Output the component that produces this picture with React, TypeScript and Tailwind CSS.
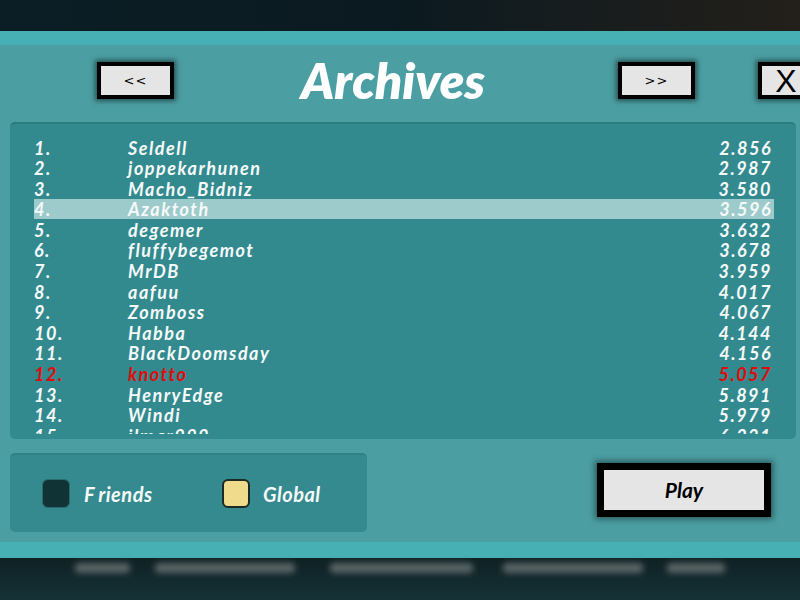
import React from 'react'

// ─── data ────────────────────────────────────────────────────────────────────

type Entry = { rank: number; name: string; time: string; me?: boolean; mine?: boolean }

const ENTRIES: Entry[] = [
  { rank: 1, name: 'Seldell', time: '2.856' },
  { rank: 2, name: 'joppekarhunen', time: '2.987' },
  { rank: 3, name: 'Macho_Bidniz', time: '3.580' },
  { rank: 4, name: 'Azaktoth', time: '3.596', me: true },
  { rank: 5, name: 'degemer', time: '3.632' },
  { rank: 6, name: 'fluffybegemot', time: '3.678' },
  { rank: 7, name: 'MrDB', time: '3.959' },
  { rank: 8, name: 'aafuu', time: '4.017' },
  { rank: 9, name: 'Zomboss', time: '4.067' },
  { rank: 10, name: 'Habba', time: '4.144' },
  { rank: 11, name: 'BlackDoomsday', time: '4.156' },
  { rank: 12, name: 'knotto', time: '5.057', mine: true },
  { rank: 13, name: 'HenryEdge', time: '5.891' },
  { rank: 14, name: 'Windi', time: '5.979' },
  { rank: 15, name: 'ilmar999', time: '6.221' },
]

// ─── pieces ──────────────────────────────────────────────────────────────────

function NavButton({ label }: { label: string }) {
  return (
    <div className="flex h-[37px] w-[77px] shrink-0 items-center justify-center border-[4px] border-black bg-[#e5e5e5] font-['DejaVu_Sans',sans-serif] text-[13px] tracking-[1px] text-black shadow-[0_0_5px_2px_rgba(0,0,0,0.5)]">
      {label}
    </div>
  )
}

function Row({ entry }: { entry: Entry }) {
  const color = entry.mine ? 'text-[#e00c0c]' : 'text-[#f5f9f9]'
  return (
    <div
      className={`flex h-[20.6px] shrink-0 items-center pt-[1px] pr-[2px] leading-[20.6px] ${color} ${
        entry.me ? 'bg-[#9dcaca]' : ''
      }`}
    >
      <span className="w-[94px] shrink-0">{entry.rank}.</span>
      <span className="flex-1">{entry.name}</span>
      <span>{entry.time}</span>
    </div>
  )
}

// ─── app ─────────────────────────────────────────────────────────────────────

export default function App() {
  return (
    <div className="flex h-[600px] w-[800px] flex-col overflow-hidden bg-[#0c1c22] font-['Lato',sans-serif]">
      {/* dark backdrop above */}
      <div className="h-[31px] shrink-0 bg-gradient-to-r from-[#0b1e25] via-[#0b1a20] to-[#231f1a]" />
      <div className="h-[14px] shrink-0 bg-[#47b0b5]" />

      {/* main panel */}
      <div className="flex h-[497px] shrink-0 flex-col bg-[#4b9ea2]">
        {/* header */}
        <div className="flex h-[77px] shrink-0 items-start pt-[17px]">
          <div className="ml-[97px]">
            <NavButton label="<<" />
          </div>
          <div className="-mt-[7px] w-[444px] shrink-0 pr-[6px] text-center text-[50px] leading-[50px] font-extrabold italic text-white">
            Archives
          </div>
          <NavButton label=">>" />
          <div className="ml-[63px] flex h-[37px] w-[58px] shrink-0 items-center justify-center border-[4px] border-black bg-[#e5e5e5] pr-[2px] font-['Liberation_Sans',sans-serif] text-[32px] leading-none text-black shadow-[0_0_5px_2px_rgba(0,0,0,0.5)]">
            X
          </div>
        </div>

        {/* score list */}
        <div className="mr-[4px] ml-[10px] h-[317px] shrink-0 rounded-[5px] border-t-2 border-[#2b7b7f] bg-[#338a8e] pt-[13px]">
          <div className="mr-[22px] ml-[24px] flex h-[297px] flex-col overflow-hidden text-[18px] font-bold italic tracking-[1.5px]">
            {ENTRIES.map((e) => (
              <Row key={e.rank} entry={e} />
            ))}
          </div>
        </div>

        {/* bottom controls */}
        <div className="mt-[14px] flex items-start">
          <div className="ml-[10px] flex h-[79px] w-[357px] shrink-0 items-center rounded-[5px] border-t-2 border-[#2e8185] bg-[#348a8e] pl-[32px] text-[20px] font-bold italic tracking-[0.5px] text-[#f5f9f9]">
            <div className="flex w-[180px] shrink-0 items-center">
              <div className="h-[29px] w-[28px] rounded-[6px] border border-[#2a6b6e] bg-[#103336]" />
              <span className="ml-[14px]">
                <span className="mr-[3px]">F</span>riends
              </span>
            </div>
            <div className="flex items-center">
              <div className="h-[29px] w-[28px] rounded-[6px] border-2 border-[#1b2a22] bg-[#f0da8c]" />
              <span className="ml-[13px]">Global</span>
            </div>
          </div>
          <div className="mt-[10px] ml-[230px] flex h-[54px] w-[174px] shrink-0 items-center justify-center border-[7px] border-black bg-[#e5e5e5] text-[21px] font-bold italic text-black shadow-[0_0_6px_2px_rgba(0,0,0,0.45)]">
            Play
          </div>
        </div>
      </div>

      <div className="h-[16px] shrink-0 bg-[#47b0b5]" />

      {/* blurred backdrop below */}
      <div className="flex h-[42px] shrink-0 items-start bg-gradient-to-b from-[#0f2125] to-[#163236] pt-[5px]">
        <div className="ml-[75px] h-[10px] w-[55px] rounded bg-[#5b6566] blur-[3px]" />
        <div className="ml-[25px] h-[10px] w-[140px] rounded bg-[#5b6566] blur-[3px]" />
        <div className="ml-[35px] h-[10px] w-[143px] rounded bg-[#5b6566] blur-[3px]" />
        <div className="ml-[30px] h-[10px] w-[140px] rounded bg-[#5b6566] blur-[3px]" />
        <div className="ml-[24px] h-[10px] w-[58px] rounded bg-[#5b6566] blur-[3px]" />
      </div>
    </div>
  )
}
